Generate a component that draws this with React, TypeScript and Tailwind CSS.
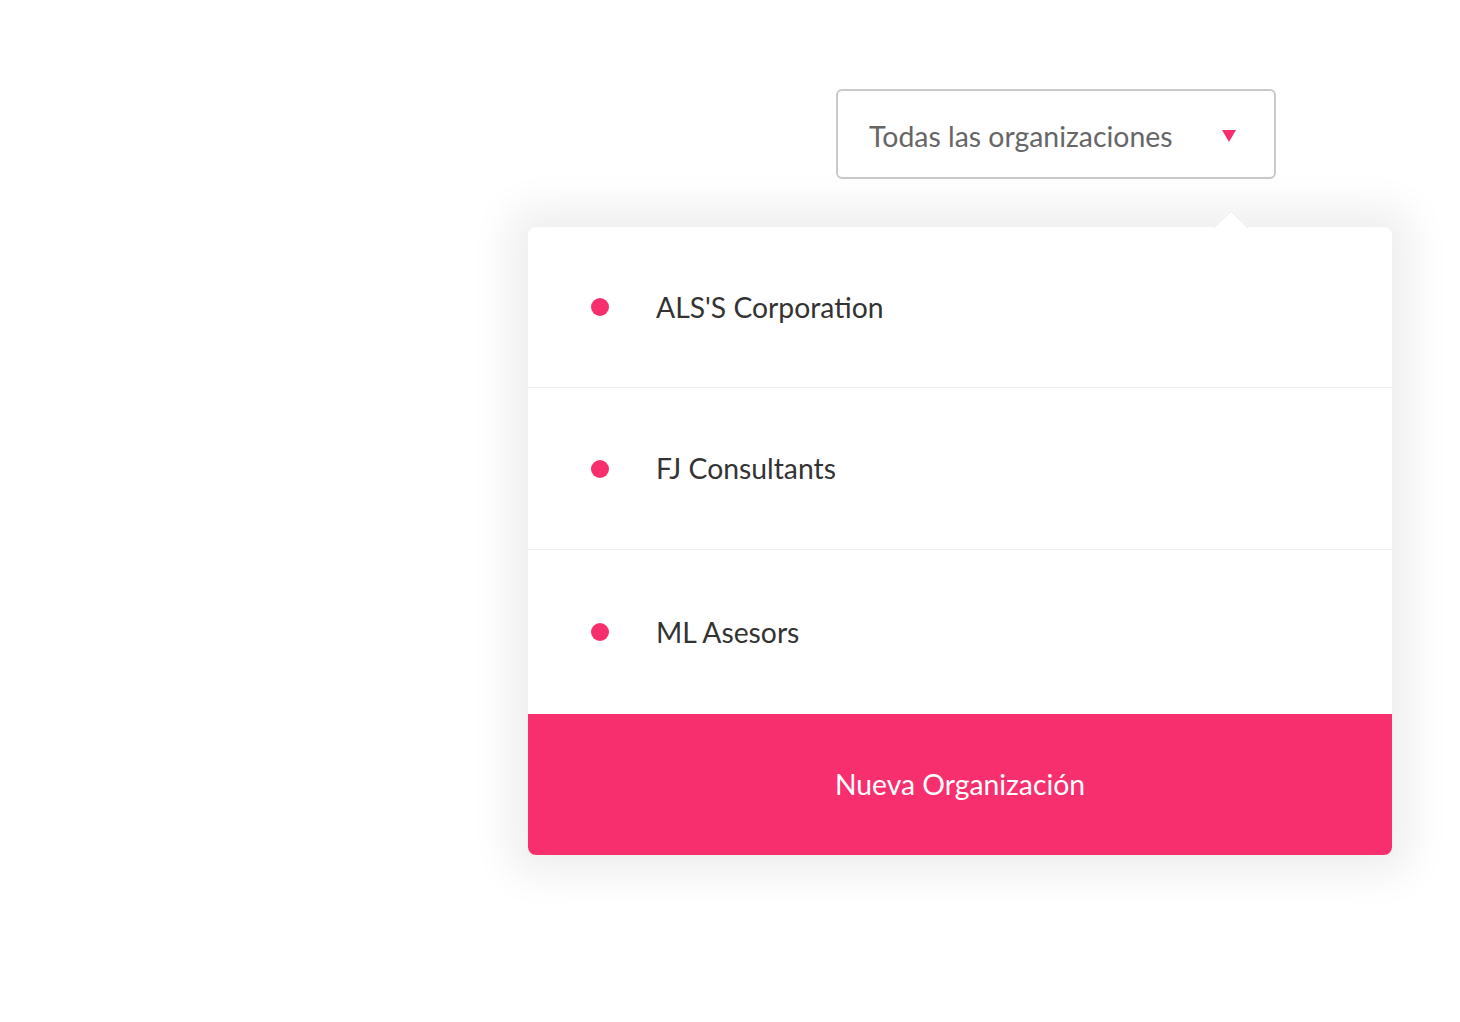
const orgs = [
  { name: "ALS'S Corporation", h: "h-[161px]" },
  { name: "FJ Consultants", h: "h-[162px]" },
  { name: "ML Asesors", h: "h-[164px]" },
];

export default function App() {
  return (
    <div className="min-h-[1022px] w-[1460px] bg-white pt-[89px] font-['Lato','Liberation_Sans',sans-serif]">
      <button
        type="button"
        className="ml-[836px] flex h-[90px] w-[440px] items-center justify-between rounded-[6px] border-2 border-[#c9c9c9] bg-white pl-[31px] pr-[38px] pt-[4px]"
      >
        <span className="text-[28.4px] leading-none text-[#666666]">Todas las organizaciones</span>
        <svg width="14" height="12" viewBox="0 0 14 12">
          <polygon points="0,0 14,0 7,12" fill="#f72f6f" />
        </svg>
      </button>

      <div className="relative ml-[528px] mt-[48px] w-[864px] rounded-[8px] bg-white shadow-[0_0_40px_20px_rgba(0,0,0,0.065)]">
        <svg
          width="36"
          height="18"
          viewBox="0 0 36 18"
          className="absolute left-[685px] top-[-17px]"
        >
          <polygon points="0,18 18,0 36,18" fill="#ffffff" />
          <polyline points="1,18 18,1 35,18" fill="none" stroke="#ebe6e8" strokeWidth="1" />
        </svg>

        {orgs.map((org, i) => (
          <div
            key={org.name}
            className={`flex items-center pl-[63px] ${org.h} ${i < orgs.length - 1 ? "border-b border-[#efefef]" : ""} ${i === 0 ? "rounded-t-[8px]" : ""}`}
          >
            <span className="h-[18px] w-[18px] shrink-0 rounded-full bg-[#f72f6f]" />
            <span className="ml-[47px] text-[28.3px] leading-none text-[#333333]">{org.name}</span>
          </div>
        ))}

        <button
          type="button"
          className="flex h-[141px] w-full items-center justify-center rounded-b-[8px] bg-[#f72f6f] text-[28.3px] text-white"
        >
          Nueva Organización
        </button>
      </div>
    </div>
  );
}
